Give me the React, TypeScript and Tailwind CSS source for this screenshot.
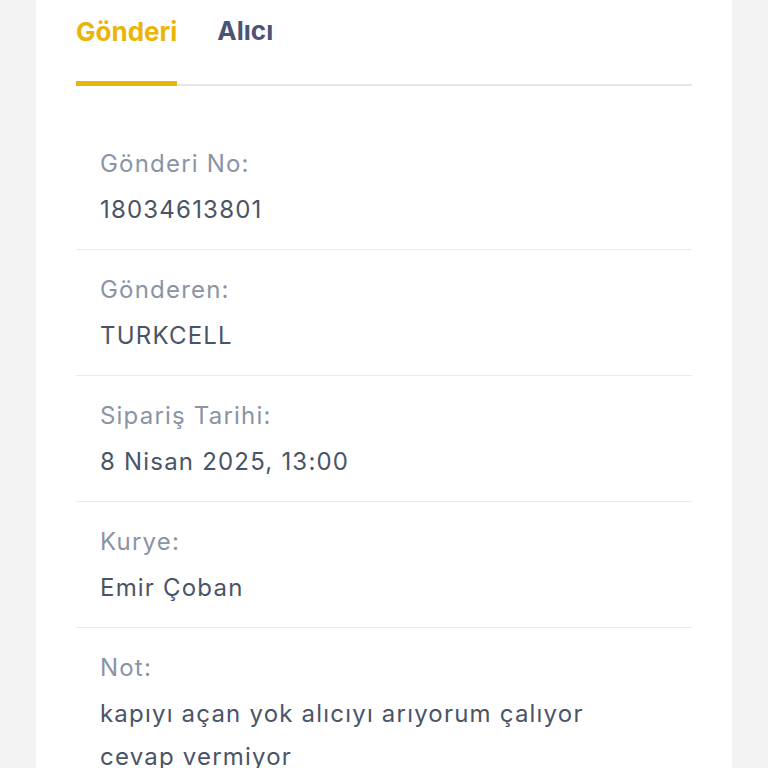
const rows: { label: string; value: string }[] = [
  { label: "Gönderi No:", value: "18034613801" },
  { label: "Gönderen:", value: "TURKCELL" },
  { label: "Sipariş Tarihi:", value: "8 Nisan 2025, 13:00" },
  { label: "Kurye:", value: "Emir Çoban" },
  { label: "Not:", value: "kapıyı açan yok alıcıyı arıyorum çalıyor cevap vermiyor" },
];

export default function App() {
  return (
    <div
      className="h-[768px] overflow-hidden bg-[#f3f3f4] px-[36px]"
      style={{ fontFamily: "Inter, 'Noto Sans', sans-serif" }}
    >
      <div className="h-full bg-white px-10">
        <div className="flex gap-10 border-b-2 border-[#e6e7ea]">
          <button className="-mb-[2px] border-b-[5px] border-[#ebb40a] pt-[15px] pb-[32px] text-[26px] font-bold leading-8 text-[#ebb40a]">
            Gönderi
          </button>
          <button className="pt-[15px] pb-[37px] text-[26px] font-bold leading-8 text-[#4b5474]">
            Alıcı
          </button>
        </div>

        <div className="mt-[38px]">
          {rows.map((r, i) => (
            <div
              key={r.label}
              className={`pl-6 pr-[80px] pt-6 pb-[18px] ${i < rows.length - 1 ? "border-b border-[#e9eaec]" : ""}`}
            >
              <div className="text-[24px] leading-8 tracking-[0.05em] text-[#8a94a5]">{r.label}</div>
              <div className="mt-2 text-[24px] leading-[43px] tracking-[0.05em] text-[#4b5466]">
                {r.value}
              </div>
            </div>
          ))}
        </div>
      </div>
    </div>
  );
}
